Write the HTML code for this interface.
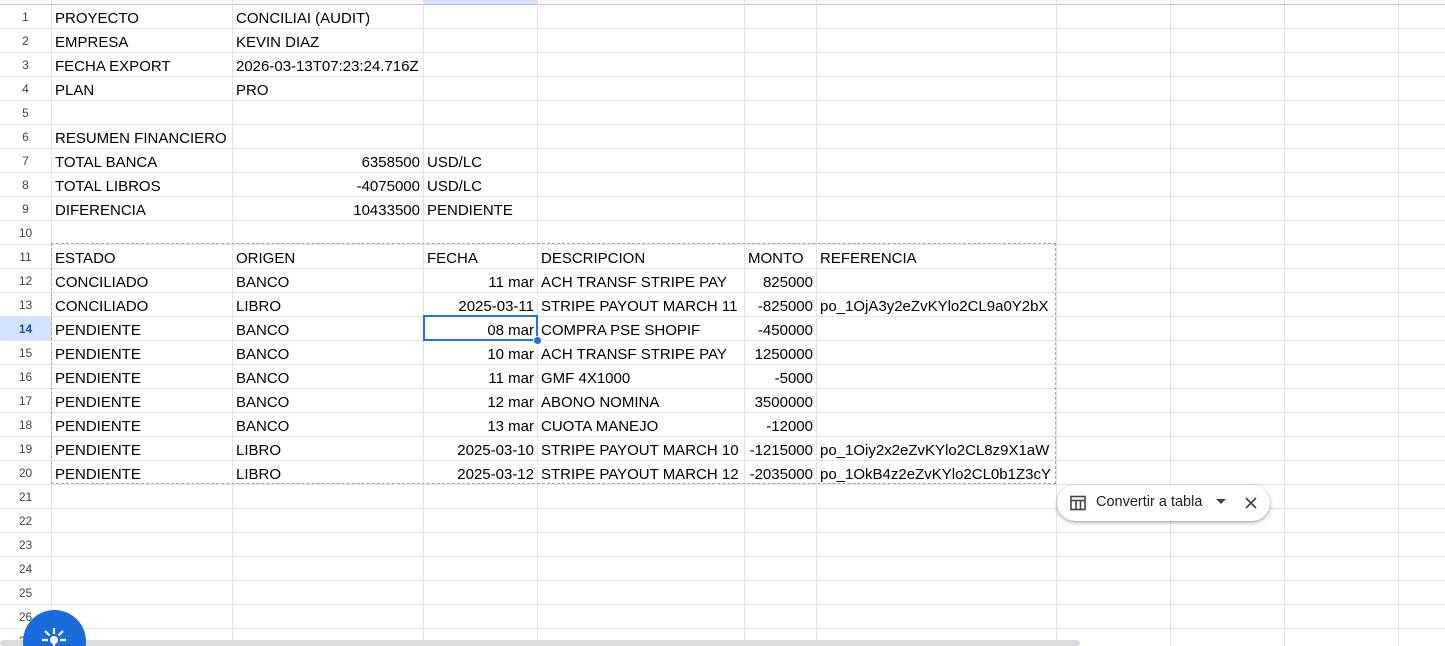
<!DOCTYPE html>
<html style="overflow:hidden;width:1445px;height:646px"><head><meta charset="utf-8">
<style>
*{margin:0;padding:0;box-sizing:border-box}
body{width:1445px;height:646px;overflow:hidden;background:#fff;font-family:"Liberation Sans",Arial,sans-serif;position:relative}
.hl{position:absolute;left:0;width:1445px;height:1px;background:#e2e3e3}
.vl{position:absolute;top:0;width:1px;height:646px;background:#e2e3e3}
.c{position:absolute;height:24px;line-height:24px;padding-top:3px;font-size:15px;color:#000;white-space:nowrap;padding-left:4px;padding-right:3px}
.r{text-align:right}
.rn{position:absolute;left:0;width:51px;height:24px;line-height:24px;padding-top:1px;text-align:center;font-size:12px;color:#444}
</style></head><body>
<div style="position:absolute;left:0;top:0;width:1445px;height:4px;background:#f8f9fa"></div>
<div style="position:absolute;left:424px;top:0;width:113px;height:4px;background:#d3e3fd"></div>
<div style="position:absolute;left:0;top:4px;width:1445px;height:1px;background:#c4c7c5"></div>
<div style="position:absolute;left:0;top:316px;width:51px;height:24px;background:#d3e3fd"></div>
<div id="grid"></div>
<script>
var g='';
var cols=[51,232,423,537,744,816,1056,1170,1284,1398];
cols.forEach(function(x){g+='<div class="vl" style="left:'+x+'px"></div>';});
for(var n=1;n<=27;n++){var y=4+24*n;g+='<div class="hl" style="top:'+y+'px"></div>';
g+='<div class="rn" style="top:'+(4+24*(n-1))+'px;'+(n==14?'font-weight:bold;color:#0b57d0':'')+'">'+n+'</div>';}
document.getElementById('grid').innerHTML=g;
</script>
<div id="cells"></div>
<script>
var data=[
[1,'A','PROYECTO'],[1,'B','CONCILIAI (AUDIT)'],
[2,'A','EMPRESA'],[2,'B','KEVIN DIAZ'],
[3,'A','FECHA EXPORT'],[3,'B','2026-03-13T07:23:24.716Z'],
[4,'A','PLAN'],[4,'B','PRO'],
[6,'A','RESUMEN FINANCIERO'],
[7,'A','TOTAL BANCA'],[7,'B','6358500',1],[7,'C','USD/LC'],
[8,'A','TOTAL LIBROS'],[8,'B','-4075000',1],[8,'C','USD/LC'],
[9,'A','DIFERENCIA'],[9,'B','10433500',1],[9,'C','PENDIENTE'],
[11,'A','ESTADO'],[11,'B','ORIGEN'],[11,'C','FECHA'],[11,'D','DESCRIPCION'],[11,'E','MONTO'],[11,'F','REFERENCIA']];
var rows=[
['CONCILIADO','BANCO','11 mar','ACH TRANSF STRIPE PAY','825000',''],
['CONCILIADO','LIBRO','2025-03-11','STRIPE PAYOUT MARCH 11','-825000','po_1OjA3y2eZvKYlo2CL9a0Y2bX'],
['PENDIENTE','BANCO','08 mar','COMPRA PSE SHOPIF','-450000',''],
['PENDIENTE','BANCO','10 mar','ACH TRANSF STRIPE PAY','1250000',''],
['PENDIENTE','BANCO','11 mar','GMF 4X1000','-5000',''],
['PENDIENTE','BANCO','12 mar','ABONO NOMINA','3500000',''],
['PENDIENTE','BANCO','13 mar','CUOTA MANEJO','-12000',''],
['PENDIENTE','LIBRO','2025-03-10','STRIPE PAYOUT MARCH 10','-1215000','po_1Oiy2x2eZvKYlo2CL8z9X1aW'],
['PENDIENTE','LIBRO','2025-03-12','STRIPE PAYOUT MARCH 12','-2035000','po_1OkB4z2eZvKYlo2CL0b1Z3cY']];
var L='ABCDEF';
rows.forEach(function(r,i){r.forEach(function(v,j){if(v)data.push([12+i,L[j],v,(j==2||j==4)?1:0]);});});
var cx={A:[51,232],B:[232,423],C:[423,537],D:[537,744],E:[744,816],F:[816,1056]};
var h='';
data.forEach(function(d){var c=cx[d[1]];h+='<div class="c'+(d[3]?' r':'')+'" style="left:'+c[0]+'px;width:'+(c[1]-c[0])+'px;top:'+(4+24*(d[0]-1))+'px">'+d[2]+'</div>';});
document.getElementById('cells').innerHTML=h;
</script>
<div style="position:absolute;left:51px;top:243px;width:1005px;height:241px;border:1px dashed #a8a8a8"></div>
<div style="position:absolute;left:423px;top:315px;width:115px;height:26px;border:2px solid #1a73e8"></div>
<div style="position:absolute;left:533px;top:336px;width:9px;height:9px;border-radius:50%;background:#1a73e8;border:1px solid #fff"></div>
<div style="position:absolute;left:1057px;top:485px;width:213px;height:36px;border-radius:18px;background:#fff;box-shadow:0 1px 3px rgba(0,0,0,.3),0 2px 6px rgba(0,0,0,.12)">
<svg style="position:absolute;left:12px;top:9px" width="18" height="18" viewBox="0 0 18 18"><rect x="2" y="2.5" width="14" height="13" fill="none" stroke="#444" stroke-width="1.6"/><line x1="2" y1="6.5" x2="16" y2="6.5" stroke="#444" stroke-width="1.6"/><line x1="7" y1="6.5" x2="7" y2="15.5" stroke="#444" stroke-width="1.6"/><line x1="11.5" y1="6.5" x2="11.5" y2="15.5" stroke="#444" stroke-width="1.6"/></svg>
<span style="position:absolute;left:39px;top:9px;font-size:14.5px;color:#1f1f1f">Convertir a tabla</span>
<svg style="position:absolute;left:159px;top:14px" width="10" height="6"><path d="M0 0L10 0L5 5Z" fill="#444"/></svg>
<svg style="position:absolute;left:187px;top:11px" width="14" height="14"><path d="M2 2L12 12M12 2L2 12" stroke="#444" stroke-width="1.7"/></svg>
</div>
<div style="position:absolute;left:0;top:640px;width:1080px;height:6px;background:#dadce0;border-radius:3px"></div>
<div style="position:absolute;left:23px;top:610px;width:63px;height:63px;border-radius:50%;background:#1a6bdb"></div>
<svg style="position:absolute;left:40px;top:628px" width="28" height="18" viewBox="0 0 28 18">
<g stroke="#fff" stroke-width="2.2"><path d="M14 6V0M14 12L14 18M8 12H2M20 12H26M9.5 7.5L5 3M18.5 7.5L23 3"/></g><circle cx="14" cy="12" r="4" fill="#fff"/></svg>
</body></html>
